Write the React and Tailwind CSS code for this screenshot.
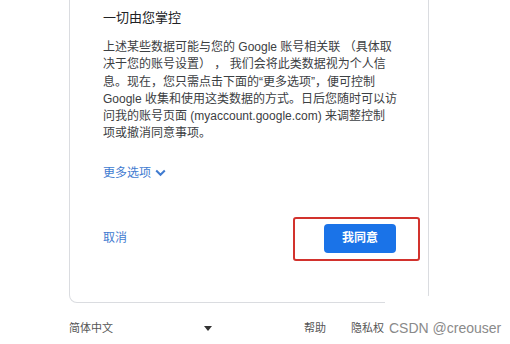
const bodyLines = [
  "上述某些数据可能与您的 Google 账号相关联 （具体取",
  "决于您的账号设置） ， 我们会将此类数据视为个人信",
  "息。现在，您只需点击下面的“更多选项”，便可控制",
  "Google 收集和使用这类数据的方式。日后您随时可以访",
  "问我的账号页面 (myaccount.google.com) 来调整控制",
  "项或撤消同意事项。",
];

const font = { fontFamily: '"Liberation Sans", "Noto Sans CJK SC", sans-serif' };

export default function App() {
  return (
    <div className="relative w-[510px] h-[344px] overflow-hidden bg-white" style={font}>
      {/* consent card, top is cut off by the screenshot */}
      <div className="ml-[69px] w-[360px] h-[303px] border-x border-b border-[#dadce0] rounded-b-lg pl-[33px] pr-[32px] pt-[9px] flex flex-col">
        <div className="text-[13px] leading-[18px] text-[#202124]">一切由您掌控</div>

        <div className="mt-[12px] text-[12px] leading-[17.3px] text-[#3c4043]">
          {bodyLines.map((line, i) => (
            <div key={i} className="whitespace-nowrap">{line}</div>
          ))}
        </div>

        <div className="mt-[21px] flex items-center gap-[4px] text-[12px] leading-[18px] text-[#3f7bd0]">
          <span>更多选项</span>
          <svg width="11" height="8" viewBox="0 0 11 8" className="mt-[1px]">
            <path d="M1.2 1.5 L5.5 5.8 L9.8 1.5" fill="none" stroke="#3f7bd0" strokeWidth="2" />
          </svg>
        </div>

        <div className="mt-[42px] flex items-center justify-between">
          <span className="text-[12px] leading-[18px] text-[#3f7bd0]">取消</span>
          <div className="relative">
            <button className="w-[72px] h-[29px] rounded-[4px] bg-[#1a73e8] text-white text-[12px] font-bold">
              我同意
            </button>
            <div className="absolute -left-[31px] -right-[24px] -top-[7px] -bottom-[8px] border-2 border-[#d2322d] rounded-[3px]" />
          </div>
        </div>
      </div>

      {/* footer */}
      <div className="mt-[16px] ml-[69px] flex items-center text-[11px] leading-[18px] text-[#555]">
        <div className="w-[143px] flex items-center justify-between">
          <span>简体中文</span>
          <svg width="8" height="5" viewBox="0 0 8 5">
            <path d="M0 0 L8 0 L4 5 Z" fill="#333" />
          </svg>
        </div>
        <span className="ml-[92px]">帮助</span>
        <span className="ml-[25px]">隐私权</span>
      </div>

      {/* watermark */}
      <div className="absolute left-[385px] top-[296px] w-[125px] h-[48px] bg-white pl-[4px] pt-[22px]">
        <span className="block text-[14px] leading-[20px] text-[#8a8a8a] whitespace-nowrap">CSDN @creouser</span>
      </div>
    </div>
  );
}
